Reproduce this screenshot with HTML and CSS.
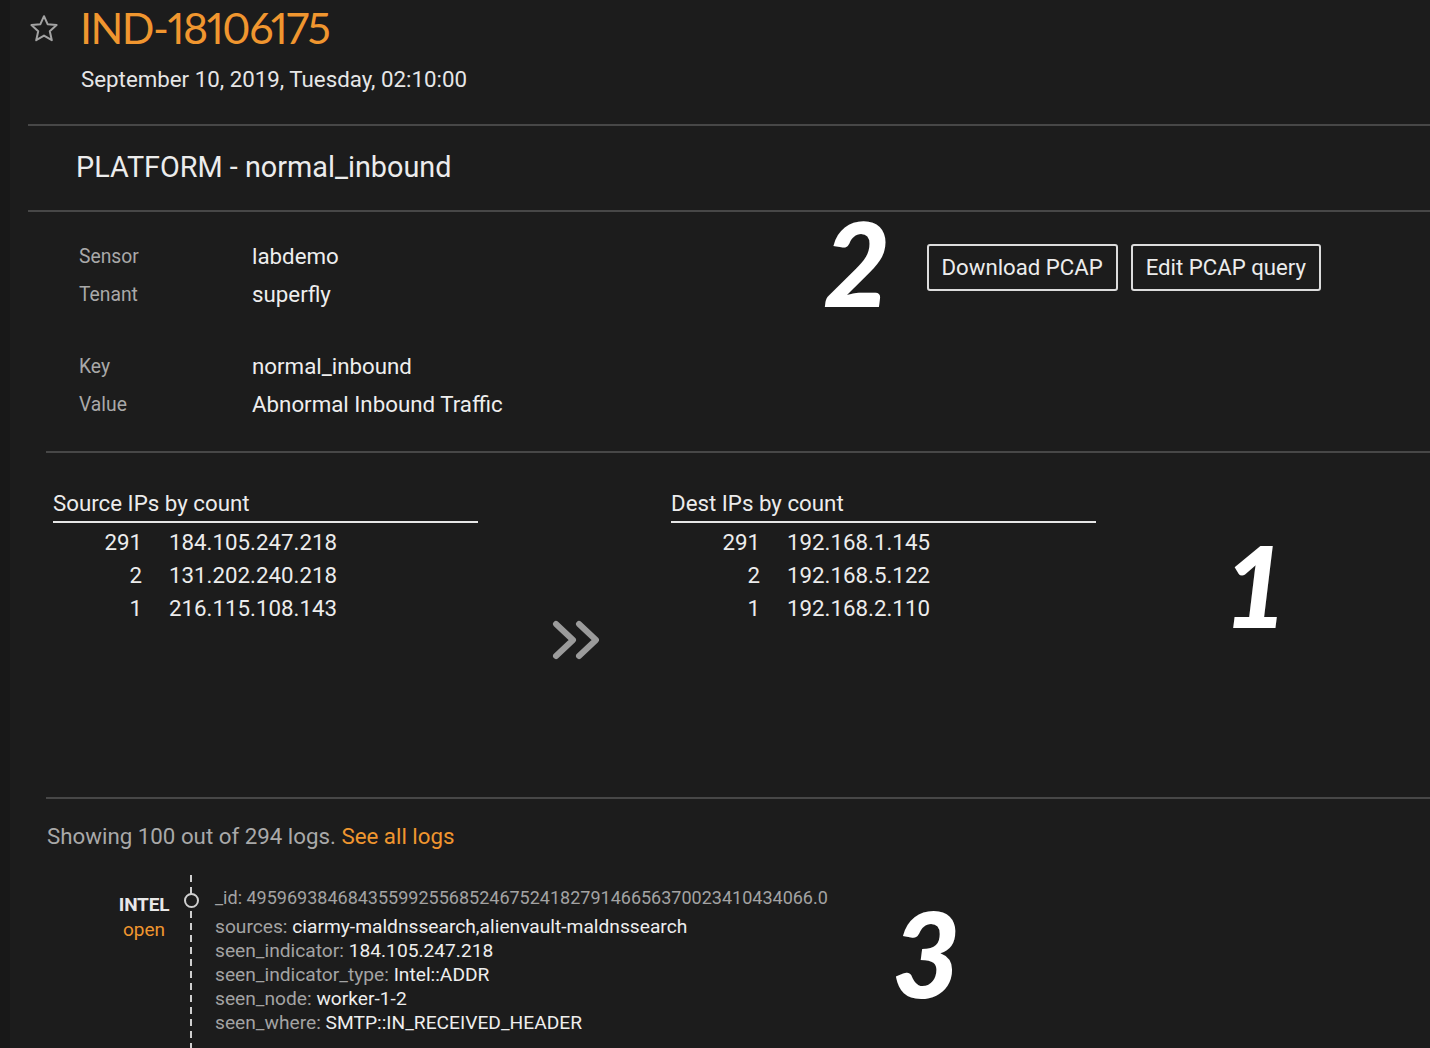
FILE: index.html
```html
<!DOCTYPE html>
<html lang="en">
<head>
<meta charset="utf-8">
<title>IND-18106175</title>
<link rel="stylesheet" href="styles.css">
</head>
<body>
<div class="app">
  <div class="rail"></div>
  <main class="main">
    <header class="hdr">
      <div class="hdr-top">
        <svg class="star" viewBox="0 0 28 27" aria-hidden="true">
          <path d="M14 1.2 L17.6 9.2 L26.6 10.1 L19.8 16.2 L21.8 25.2 L14 20.6 L6.2 25.2 L8.2 16.2 L1.4 10.1 L10.4 9.2 Z" fill="none" stroke="#a3a3a3" stroke-width="2" stroke-linejoin="round"/>
        </svg>
        <h1 class="title">IND-18106175</h1>
      </div>
      <div class="date">September 10, 2019, Tuesday, 02:10:00</div>
    </header>

    <div class="rule-title">PLATFORM - normal_inbound</div>

    <section class="details">
      <div class="kv">
        <div class="kv-group">
          <div class="kv-row"><span class="k">Sensor</span><span class="v">labdemo</span></div>
          <div class="kv-row"><span class="k">Tenant</span><span class="v">superfly</span></div>
        </div>
        <div class="kv-group">
          <div class="kv-row"><span class="k">Key</span><span class="v">normal_inbound</span></div>
          <div class="kv-row"><span class="k">Value</span><span class="v">Abnormal Inbound Traffic</span></div>
        </div>
      </div>
      <div class="actions">
        <button class="btn">Download PCAP</button>
        <button class="btn">Edit PCAP query</button>
      </div>
      <span class="mark mark-2">2</span>
    </section>

    <section class="ips">
      <div class="ipcol">
        <div class="ip-head">Source IPs by count</div>
        <div class="ip-row"><span class="cnt">291</span><span class="ip">184.105.247.218</span></div>
        <div class="ip-row"><span class="cnt">2</span><span class="ip">131.202.240.218</span></div>
        <div class="ip-row"><span class="cnt">1</span><span class="ip">216.115.108.143</span></div>
      </div>
      <div class="flow">
        <svg class="chev" viewBox="0 0 48 40" aria-hidden="true">
          <path d="M5 4 L22 20 L5 36 M28 4 L45 20 L28 36" fill="none" stroke="#9b9b9b" stroke-width="6" stroke-linecap="round" stroke-linejoin="round"/>
        </svg>
      </div>
      <div class="ipcol">
        <div class="ip-head">Dest IPs by count</div>
        <div class="ip-row"><span class="cnt">291</span><span class="ip">192.168.1.145</span></div>
        <div class="ip-row"><span class="cnt">2</span><span class="ip">192.168.5.122</span></div>
        <div class="ip-row"><span class="cnt">1</span><span class="ip">192.168.2.110</span></div>
      </div>
      <span class="mark mark-1">1</span>
    </section>

    <section class="logs">
      <p class="summary">Showing 100 out of 294 logs. <a class="link" href="#">See all logs</a></p>
      <div class="entry">
        <div class="entry-label">
          <div class="etype">INTEL</div>
          <div class="estate">open</div>
        </div>
        <div class="entry-body">
          <span class="dot"></span>
          <div class="line first">_id: 49596938468435599255685246752418279146656370023410434066.0</div>
          <div class="line">sources: <span class="val">ciarmy-maldnssearch,alienvault-maldnssearch</span></div>
          <div class="line">seen_indicator: <span class="val">184.105.247.218</span></div>
          <div class="line">seen_indicator_type: <span class="val">Intel::ADDR</span></div>
          <div class="line">seen_node: <span class="val">worker-1-2</span></div>
          <div class="line">seen_where: <span class="val">SMTP::IN_RECEIVED_HEADER</span></div>
        </div>
      </div>
      <span class="mark mark-3">3</span>
    </section>
  </main>
</div>
</body>
</html>
```

FILE: styles.css
```css
* { box-sizing: border-box; }

html, body {
  margin: 0;
  padding: 0;
  background: #1c1c1c;
  overflow: hidden;
}

body {
  font-family: Roboto, "Liberation Sans", sans-serif;
  color: #e8e8e8;
}

.app {
  display: flex;
  min-height: 1048px;
}

.rail {
  width: 10px;
  flex: none;
  background: #181818;
}

.main {
  flex: 1;
  padding-left: 18px;
  min-width: 0;
}

/* header */
.hdr {
  padding-bottom: 30px;
  border-bottom: 2px solid #474747;
}

.hdr-top {
  display: flex;
  align-items: center;
  height: 56px;
}

.star {
  width: 28px;
  height: 27px;
  margin-left: 2px;
  flex: none;
}

.title {
  margin: 0 0 0 22px;
  font-family: Lato, "Open Sans", sans-serif;
  font-weight: 400;
  font-size: 43px;
  line-height: 56px;
  color: #f0962f;
  font-variant-numeric: proportional-nums;
  letter-spacing: -1.5px;
}

.date {
  margin-top: 8px;
  padding-left: 53px;
  font-size: 22.3px;
  line-height: 30px;
  color: #e6e6e6;
}

.rule-title {
  padding: 23px 0 25px 48px;
  font-size: 28.8px;
  line-height: 36px;
  color: #ececec;
  border-bottom: 2px solid #474747;
}

/* details */
.details {
  position: relative;
  display: flex;
  justify-content: space-between;
  align-items: flex-start;
  padding: 25px 109px 28px 51px;
}

.kv {
  display: flex;
  flex-direction: column;
  gap: 34px;
}

.kv-row {
  display: flex;
  align-items: center;
  height: 38px;
}

.k {
  width: 173px;
  font-size: 19.3px;
  color: #a9a9a9;
}

.v {
  font-size: 22.3px;
  color: #eeeeee;
}

.actions {
  display: flex;
  gap: 13px;
  margin-top: 7px;
}

.btn {
  height: 47px;
  padding: 0 13px;
  background: transparent;
  border: 2px solid #dcdcdc;
  border-radius: 3px;
  color: #ececec;
  font-family: Roboto, "Liberation Sans", sans-serif;
  font-size: 22.2px;
  line-height: 43px;
}

/* annotation numerals */
.mark {
  position: absolute;
  font-family: Lato, "Open Sans", sans-serif;
  font-weight: 900;
  font-style: italic;
  font-size: 116px;
  line-height: 1;
  color: #ffffff;
}

.mark-2 { left: 795px; top: -7px; }
.mark-1 { left: 1177px; top: 76px; font-size: 112px; }
.mark-3 { left: 846px; top: 95px; font-size: 118px; }

/* IP tables */
.ips {
  position: relative;
  display: flex;
  margin-left: 18px;
  height: 346px;
  padding: 36px 0 0 7px;
  border-top: 2px solid #474747;
}

.ipcol {
  width: 425px;
  flex: none;
}

.ip-head {
  font-size: 22.3px;
  line-height: 28px;
  padding-bottom: 4px;
  border-bottom: 2px solid #e6e6e6;
  color: #ececec;
  margin-bottom: 2px;
}

.ip-row {
  display: flex;
  align-items: center;
  height: 33px;
  font-size: 22.3px;
  color: #ececec;
}

.cnt {
  width: 89px;
  text-align: right;
}

.ip {
  margin-left: 27px;
}

.flow {
  width: 193px;
  flex: none;
  display: flex;
  justify-content: center;
  padding-top: 131px;
}

.chev {
  width: 48px;
  height: 40px;
}

/* logs */
.logs {
  position: relative;
  margin-left: 18px;
  border-top: 2px solid #474747;
  padding: 22px 0 0 1px;
}

.summary {
  margin: 0;
  font-size: 22.3px;
  line-height: 30px;
  color: #a9a9a9;
}

.link {
  color: #f0962f;
  text-decoration: none;
}

.entry {
  display: flex;
  margin-top: 24px;
}

.entry-label {
  width: 54px;
  margin-left: 70px;
  padding-top: 18px;
  text-align: center;
  flex: none;
}

.etype {
  font-size: 19px;
  font-weight: 700;
  line-height: 24px;
  color: #e8e8e8;
  letter-spacing: -0.2px;
}

.estate {
  font-size: 19px;
  line-height: 26px;
  color: #f0962f;
}

.entry-body {
  position: relative;
  margin-left: 19px;
  padding: 11px 0 60px 25px;
  background: repeating-linear-gradient(to bottom, #cfcfcf 0 7px, transparent 7px 12px) left top / 2px 100% no-repeat;
}

.dot {
  position: absolute;
  left: -6px;
  top: 18px;
  width: 15px;
  height: 15px;
  border: 2px solid #cfcfcf;
  border-radius: 50%;
  background: #1c1c1c;
}

.line {
  font-size: 19.2px;
  line-height: 24px;
  color: #a3a3a3;
  white-space: nowrap;
}

.line.first {
  font-size: 18px;
  margin-bottom: 5px;
}

.val {
  color: #eeeeee;
}
```
